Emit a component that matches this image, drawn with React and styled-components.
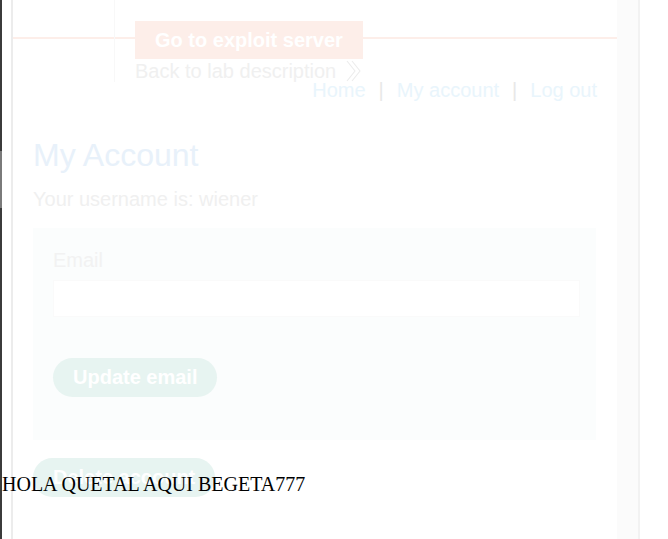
import styled, { createGlobalStyle } from 'styled-components';

const Global = createGlobalStyle`
  html, body {
    margin: 0;
    padding: 0;
    background: #ffffff;
    overflow: hidden;
  }
`;

const Page = styled.div`
  position: relative;
  display: flex;
  width: 668px;
  height: 539px;
  font-family: "Liberation Sans", Arial, sans-serif;
`;

const Edge = styled.div`
  width: 2px;
  height: 100%;
  background: linear-gradient(
    to bottom,
    #3b3b3b 0,
    #3b3b3b 151px,
    #7a7a7a 151px,
    #7a7a7a 208px,
    #3b3b3b 208px
  );
`;

const Panel = styled.div`
  display: flex;
  margin-left: 9px;
  height: 100%;
  border-left: 2px solid #ececec;
  border-right: 2px solid #f2f2f2;
`;

const Content = styled.div`
  width: 604px;
  display: flex;
  flex-direction: column;
`;

const Track = styled.div`
  width: 21px;
  background: #fbfbfb;
`;

const Header = styled.div`
  height: 78px;
  padding-left: 101px;
  background: linear-gradient(
    to bottom,
    transparent 37px,
    #fdeee9 37px,
    #fdeee9 39px,
    transparent 39px
  );
`;

const HeaderColumn = styled.div`
  height: 82px;
  border-left: 1px solid #f8f8f8;
  padding: 21px 0 0 20px;
  box-sizing: border-box;
`;

const ExploitButton = styled.div`
  display: inline-block;
  background: #fdeee9;
  color: #ffffff;
  font-weight: bold;
  font-size: 20px;
  line-height: 38px;
  padding: 0 20px;
  height: 38px;
`;

const BackLink = styled.div`
  display: flex;
  align-items: center;
  gap: 9px;
  color: #f0f0f0;
  font-size: 20px;
  line-height: 24px;
`;

const Nav = styled.nav`
  display: flex;
  justify-content: flex-end;
  gap: 13px;
  padding-right: 20px;
  font-size: 20px;
  line-height: 24px;
`;

const NavLink = styled.span`
  color: #e9f5fc;
`;

const Sep = styled.span`
  color: #e8e8e8;
`;

const Main = styled.div`
  padding: 0 21px 0 20px;
  display: flex;
  flex-direction: column;
`;

const Title = styled.h1`
  margin: 33px 0 0;
  font-size: 32px;
  font-weight: normal;
  line-height: 40px;
  color: #e8f1fa;
`;

const Username = styled.p`
  margin: 12px 0 0;
  font-size: 20px;
  line-height: 24px;
  color: #f0f0f0;
`;

const FormBox = styled.div`
  margin-top: 17px;
  height: 212px;
  background: #fbfdfd;
  padding: 20px 16px 0 20px;
  box-sizing: border-box;
  display: flex;
  flex-direction: column;
`;

const Label = styled.label`
  font-size: 20px;
  line-height: 24px;
  color: #f2f2f2;
`;

const Input = styled.div`
  margin-top: 8px;
  height: 37px;
  background: #ffffff;
  border: 1px solid #fafafa;
  box-sizing: border-box;
`;

const Pill = styled.div`
  align-self: flex-start;
  margin-top: ${p => p.$top}px;
  height: 39px;
  line-height: 39px;
  padding: 0 20px;
  border-radius: 20px;
  background: #e7f4f1;
  color: #ffffff;
  font-weight: bold;
  font-size: 20px;
`;

const Overlay = styled.div`
  position: absolute;
  left: 2px;
  top: 473px;
  font-family: "Liberation Serif", "Times New Roman", serif;
  font-size: 20px;
  line-height: 23px;
  color: #000000;
  white-space: nowrap;
`;

const Chevrons = () => (
  <svg width="18" height="22" viewBox="0 0 18 22" fill="none" stroke="#ececec" strokeWidth="1.1">
    <path d="M2 1 L10 11 L2 21" />
    <path d="M7 1 L15 11 L7 21" />
  </svg>
);

export default function App() {
  return (
    <>
      <Global />
      <Page>
        <Edge />
        <Panel>
          <Content>
            <Header>
              <HeaderColumn>
                <ExploitButton>Go to exploit server</ExploitButton>
                <BackLink>
                  Back to lab description
                  <Chevrons />
                </BackLink>
              </HeaderColumn>
            </Header>
            <Nav>
              <NavLink>Home</NavLink>
              <Sep>|</Sep>
              <NavLink>My account</NavLink>
              <Sep>|</Sep>
              <NavLink>Log out</NavLink>
            </Nav>
            <Main>
              <Title>My Account</Title>
              <Username>Your username is: wiener</Username>
              <FormBox>
                <Label>Email</Label>
                <Input />
                <Pill $top={41}>Update email</Pill>
              </FormBox>
              <Pill $top={18}>Delete account</Pill>
            </Main>
          </Content>
          <Track />
        </Panel>
        <Overlay>HOLA QUETAL AQUI BEGETA777</Overlay>
      </Page>
    </>
  );
}
